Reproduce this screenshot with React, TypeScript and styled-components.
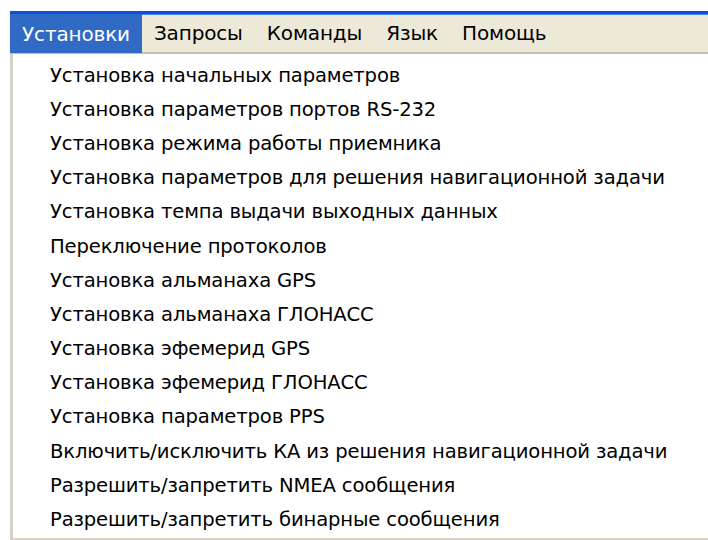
import React from 'react';
import styled, { createGlobalStyle } from 'styled-components';

const GlobalStyle = createGlobalStyle`
  html, body {
    margin: 0;
    padding: 0;
    background: #ffffff;
  }
  body {
    font-family: "DejaVu Sans", Verdana, sans-serif;
  }
`;

const Screen = styled.div`
  width: 708px;
  height: 540px;
  overflow: hidden;
  display: flex;
  flex-direction: column;
  padding-top: 11px;
  box-sizing: border-box;
`;

const MenuBar = styled.div`
  margin-left: 10px;
  height: 38px;
  display: flex;
  align-items: stretch;
  background: #ece9d8;
  border-top: 3px solid #0a50e0;
  box-shadow: inset 0 1px 0 #4f86ec;
  border-bottom: 2px solid #c4c0ad;
  flex-shrink: 0;
`;

const MenuTitle = styled.div<{ $active?: boolean }>`
  display: flex;
  align-items: center;
  padding: 0 12px;
  margin-bottom: ${(p) => (p.$active ? '-1px' : '0')};
  font-size: 20px;
  letter-spacing: -0.15px;
  color: ${(p) => (p.$active ? '#ffffff' : '#000000')};
  background: ${(p) => (p.$active ? '#316ac5' : 'transparent')};
`;

const Dropdown = styled.div`
  margin-left: 10px;
  flex: 1;
  background: #ffffff;
  border-left: 3px solid #d6d2c2;
  border-bottom: 2px solid #d8d5c8;
  padding-top: 4px;
  display: flex;
  flex-direction: column;
`;

const Item = styled.div`
  height: 34.2px;
  display: flex;
  align-items: center;
  padding-left: 37px;
  font-size: 19.6px;
  letter-spacing: -0.15px;
  color: #000000;
  white-space: nowrap;
`;

const titles = ['Установки', 'Запросы', 'Команды', 'Язык', 'Помощь'];

const items = [
  'Установка начальных параметров',
  'Установка параметров портов RS-232',
  'Установка режима работы приемника',
  'Установка параметров для решения навигационной задачи',
  'Установка темпа выдачи выходных данных',
  'Переключение протоколов',
  'Установка альманаха GPS',
  'Установка альманаха ГЛОНАСС',
  'Установка эфемерид GPS',
  'Установка эфемерид ГЛОНАСС',
  'Установка параметров PPS',
  'Включить/исключить КА из решения навигационной задачи',
  'Разрешить/запретить NMEA сообщения',
  'Разрешить/запретить бинарные сообщения',
];

const App: React.FC = () => {
  return (
    <>
      <GlobalStyle />
      <Screen>
        <MenuBar>
          {titles.map((t, i) => (
            <MenuTitle key={t} $active={i === 0}>
              {t}
            </MenuTitle>
          ))}
        </MenuBar>
        <Dropdown>
          {items.map((text) => (
            <Item key={text}>{text}</Item>
          ))}
        </Dropdown>
      </Screen>
    </>
  );
};

export default App;
